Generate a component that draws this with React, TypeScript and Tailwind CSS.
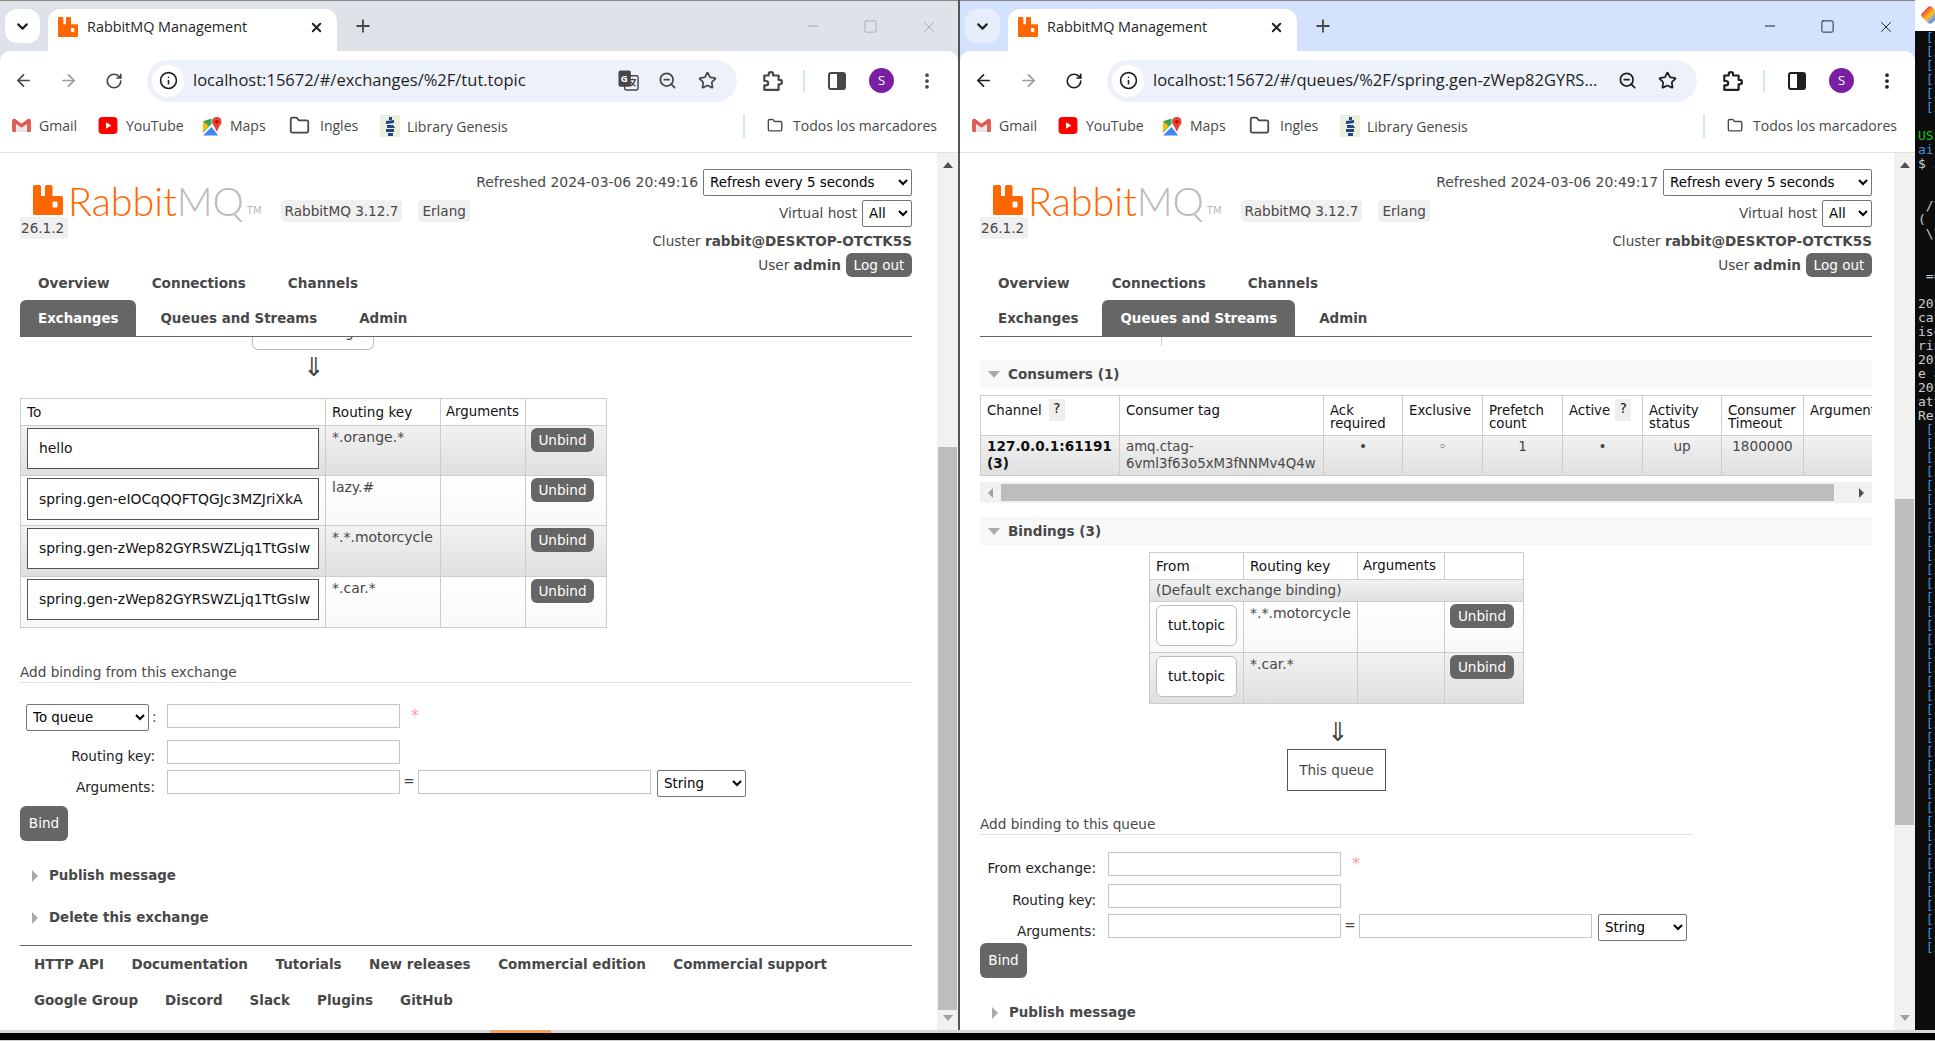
import type { ReactNode } from "react";
import {
  ArrowLeft,
  ArrowRight,
  ChevronDown,
  EllipsisVertical,
  Folder,
  Info,
  Minus,
  Plus,
  RotateCw,
  Square,
  Star,
  X,
  ZoomOut,
} from "lucide-react";

function RabbitIcon({ className }: { className: string }) {
  return (
    <svg viewBox="0 0 30 30" className={className}>
      <path
        fill="#ff6600"
        fillRule="evenodd"
        d="M1.5 0H6.5Q8 0 8 1.5V11H12V1.5Q12 0 13.5 0H18Q19.5 0 19.5 1.5V11H28.5Q30 11 30 12.5V28.5Q30 30 28.5 30H1.5Q0 30 0 28.5V1.5Q0 0 1.5 0ZM20.5 16.5Q19.5 16.5 19.5 17.5V21.5Q19.5 22.5 20.5 22.5H23.5Q24.5 22.5 24.5 21.5V17.5Q24.5 16.5 23.5 16.5Z"
      />
    </svg>
  );
}

function GmailIcon() {
  return (
    <svg viewBox="0 0 20 16" className="h-[15px] w-[19px]">
      <path fill="#e8e8e8" d="M3 15V4l7 5 7-5v11z" />
      <path fill="#e0594e" d="M0 3v10.5A1.5 1.5 0 0 0 1.5 15H4V6l6 4.5L16 6v9h2.5a1.5 1.5 0 0 0 1.500-1.500V3c0-2-2.200-3-3.700-1.800L10 6 3.700 1.200C2.200 0 0 1 0 3z" />
    </svg>
  );
}

function YoutubeIcon() {
  return (
    <svg viewBox="0 0 20 18" className="h-[17px] w-[20px]">
      <rect width="20" height="18" rx="4" fill="#ff0000" />
      <path d="M8 5.500l5.500 3.500L8 12.500z" fill="#fff" />
    </svg>
  );
}

function MapsIcon() {
  return (
    <svg viewBox="0 0 20 20" className="h-[20px] w-[19px]">
      <path fill="#34a853" d="M0 5l9-3v6L0 17z" />
      <path fill="#4285f4" d="M0 20l9-9 7 9z" />
      <path fill="#fbbc04" d="M0 5l6 5-6 6z" />
      <circle cx="14.500" cy="5.500" r="5" fill="#ea4335" />
      <path fill="#ea4335" d="M10.500 8h8l-4 8z" />
      <circle cx="14.500" cy="5.500" r="1.800" fill="#a50e0e" />
    </svg>
  );
}

function GenesisIcon() {
  return (
    <svg viewBox="0 0 20 22" className="h-[22px] w-[20px]">
      <rect width="20" height="22" fill="#eeeedd" />
      <path fill="#1d4788" d="M9 2h3v3H9zM6 6l8-1v3l-8 1zM7 10h6l2 3H7zM6 14h8v3H6zM8 18h5v3H8z" />
    </svg>
  );
}

function TranslateIcon() {
  return (
    <svg viewBox="0 0 22 22" className="ml-[19px] h-[21px] w-[21px]">
      <rect x="7" y="6" width="14" height="15" rx="1.500" fill="#edf2fa" stroke="#474747" strokeWidth="1.500" />
      <rect x="0.500" y="0.500" width="13" height="17" rx="2" fill="#474747" />
      <text x="3" y="12.500" fontSize="10" fontWeight="700" fontFamily="Open Sans, sans-serif" fill="#fff">G</text>
      <path d="M12 10h7M15.500 9v1.500M18 10.500q-2 5-5 6.500M13.500 12.500q2 3 5 4.500" stroke="#474747" strokeWidth="1.300" fill="none" />
    </svg>
  );
}

function PuzzleIcon({ className }: { className: string }) {
  return (
    <svg viewBox="0 0 20 20" fill="none" stroke="currentColor" strokeWidth="2" strokeLinejoin="round" className={`h-[22px] w-[22px] ${className}`}>
      <path d="M3 5h4V4a2 2 0 0 1 4 0v1h5v4h1a2 2 0 0 1 0 4h-1v5H3v-4h1.500a2 2 0 0 0 0-4H3z" />
    </svg>
  );
}

function SidePanelIcon({ className }: { className: string }) {
  return (
    <svg viewBox="0 0 18 18" className={`h-[18px] w-[18px] ${className}`}>
      <rect x="1" y="1" width="16" height="16" rx="2" fill="none" stroke="currentColor" strokeWidth="2" />
      <rect x="9" y="1" width="8" height="16" fill="currentColor" />
    </svg>
  );
}

function Bookmark({ icon, label, gap = "ml-[8px]", width }: { icon: ReactNode; label: string; gap?: string; width: string }) {
  return (
    <div className={`flex items-center ${width}`}>
      {icon}
      <span className={`${gap} whitespace-nowrap text-[14px] text-[#474747]`}>{label}</span>
    </div>
  );
}

function ChromeBar({ active, url, translate = false }: { active: boolean; url: string; translate?: boolean }) {
  const iconColor = active ? "text-[#1f1f1f]" : "text-[#474747]";
  const winColor = active ? "text-[#1f1f1f]" : "text-[#a7abb0]";
  return (
    <div className={`font-['Open_Sans',sans-serif] ${active ? "bg-[#d3e3fd]" : "bg-[#dee3ea]"}`}>
      <div className="flex h-[51px] border-t border-[#888]">
        <div className={`ml-[5px] mt-[8px] flex h-[34px] w-[35px] items-center justify-center rounded-[12px] ${active ? "bg-[#e6eefc]" : "bg-white"}`}>
          <ChevronDown size={17} strokeWidth={3} className="text-[#1f1f1f]" />
        </div>
        <div className="ml-[8px] mt-[8px] flex h-[42px] w-[289px] items-center rounded-t-[12px] bg-white pb-[6px] pl-[10px]">
          <RabbitIcon className="h-[20px] w-[20px]" />
          <span className="ml-[9px] w-[217px] whitespace-nowrap text-[14.400px] text-[#1f1f1f]">RabbitMQ Management</span>
          <X size={15} strokeWidth={3} className="ml-[5px] text-[#1f1f1f]" />
        </div>
        <Plus size={20} strokeWidth={2.2} className="ml-[16px] mt-[15px] text-[#474747]" />
        <div className="flex-1" />
        <div className={`mr-[20px] mt-[18px] flex items-start gap-[42px] ${winColor}`}>
          <Minus size={16} strokeWidth={1.5} className="mt-[-1px]" />
          <Square size={15} strokeWidth={1.5} />
          <X size={18} strokeWidth={1.3} className="mt-[-1px]" />
        </div>
      </div>
      <div className="rounded-t-[10px] bg-white">
        <div className="flex h-[59px] items-center pl-[1px]">
          <div className="flex h-[45px] w-[45px] items-center justify-center"><ArrowLeft size={19} strokeWidth={2.2} className={iconColor} /></div>
          <div className="flex h-[45px] w-[45px] items-center justify-center"><ArrowRight size={19} strokeWidth={2.2} className="text-[#9a9a9a]" /></div>
          <div className="flex h-[45px] w-[45px] items-center justify-center"><RotateCw size={18} strokeWidth={2.2} className={iconColor} /></div>
          <div className="ml-[11px] flex h-[42px] w-[590px] items-center rounded-full bg-[#edf2fa] pl-[5px]">
            <div className="flex h-[32px] w-[32px] items-center justify-center rounded-full bg-white">
              <Info size={19} strokeWidth={2} className="text-[#1f1f1f]" />
            </div>
            <span className="ml-[9px] w-[406px] whitespace-nowrap text-[16.500px] text-[#1f1f1f]">{url}</span>
            {translate ? <TranslateIcon /> : <span className="ml-[19px] w-[21px]" />}
            <ZoomOut size={19} strokeWidth={2.2} className={`ml-[19px] ${iconColor}`} />
            <Star size={19} strokeWidth={2.2} className={`ml-[21px] ${iconColor}`} />
          </div>
          <div className="ml-[12px] flex h-[45px] w-[45px] items-center justify-center"><PuzzleIcon className={iconColor} /></div>
          <div className="mx-[9px] h-[22px] w-[2px] bg-[#d3e3fd]" />
          <div className="flex h-[45px] w-[45px] items-center justify-center"><SidePanelIcon className={iconColor} /></div>
          <div className="flex h-[45px] w-[45px] items-center justify-center">
            <div className="flex h-[25px] w-[25px] items-center justify-center rounded-full bg-[#7b1fa2] text-[13px] text-white">S</div>
          </div>
          <div className="flex h-[45px] w-[45px] items-center justify-center"><EllipsisVertical size={20} strokeWidth={2.5} className={iconColor} /></div>
        </div>
        <div className="flex h-[42px] items-start pl-[12px] pt-[5px]">
          <Bookmark icon={<GmailIcon />} label="Gmail" width="w-[86px]" />
          <Bookmark icon={<YoutubeIcon />} label="YouTube" width="w-[105px]" />
          <Bookmark icon={<MapsIcon />} label="Maps" width="w-[86px]" />
          <Bookmark icon={<Folder size={21} strokeWidth={2} className="text-[#474747]" />} label="Ingles" gap="ml-[10px]" width="w-[91px]" />
          <Bookmark icon={<GenesisIcon />} label="Library Genesis" gap="ml-[7px]" width="w-[363px]" />
          <div className="mt-[-1px] h-[24px] w-[2px] bg-[#d3e3fd]" />
          <div className="ml-[22px]">
            <Bookmark icon={<Folder size={21} strokeWidth={2} className="text-[#474747]" />} label="Todos los marcadores" gap="ml-[10px]" width="w-[170px]" />
          </div>
        </div>
        <div className="h-px bg-[#e0e0e0]" />
      </div>
    </div>
  );
}

function Scrollbar({ top, thumb }: { top: string; thumb: string }) {
  return (
    <div className="flex h-full w-[21px] shrink-0 flex-col bg-[#f1f1f1]">
      <div className={`${top} flex justify-center pt-[9px]`}>
        <div className="h-0 w-0 border-x-[5px] border-b-[6px] border-x-transparent border-b-[#505050]" />
      </div>
      <div className={`${thumb} mx-[1px] bg-[#bdbdbd]`} />
      <div className="flex flex-1 items-end justify-center pb-[9px]">
        <div className="h-0 w-0 border-x-[5px] border-t-[6px] border-x-transparent border-t-[#a0a0a0]" />
      </div>
    </div>
  );
}

function Badge({ children, className = "" }: { children: ReactNode; className?: string }) {
  return <span className={`rounded-[4px] bg-[#f0f0f0] leading-[22px] ${className}`}>{children}</span>;
}

function Select({ value, className }: { value: string; className: string }) {
  return (
    <select defaultValue={value} className={`h-[27px] rounded-[2px] border border-[#767676] bg-white pl-[2px] text-[13.400px] text-black ${className}`}>
      <option>{value}</option>
    </select>
  );
}

function GrayButton({ children, className }: { children: ReactNode; className: string }) {
  return <div className={`flex items-center justify-center rounded-[6px] bg-[#666] text-white ${className}`}>{children}</div>;
}

function Header({ refreshed, tab }: { refreshed: string; tab: "exchanges" | "queues" }) {
  return (
    <div className="w-[892px]">
      <div className="flex h-[121px] justify-between pt-[16px]">
        <div className="pt-[13px]">
          <div className="flex h-[34px] items-start">
            <RabbitIcon className="ml-[13px] mt-[3px] h-[30px] w-[30px]" />
            <div className="ml-[5px] mt-[-6px] whitespace-nowrap font-['Lato',sans-serif] text-[39.500px] leading-[50px] font-light text-[#ff6600]">
              Rabbit<span className="text-[#bbbbbb]">MQ</span>
            </div>
            <span className="ml-[3px] mt-[23px] text-[10px] leading-[12px] text-[#bbb]">TM</span>
            <Badge className="ml-[19px] mt-[18px] px-[4px]">RabbitMQ 3.12.7</Badge>
            <Badge className="ml-[16px] mt-[18px] rounded-r-none px-[4px]">Erlang</Badge>
          </div>
          <Badge className="mt-[1px] inline-block rounded-l-none pl-[1px] pr-[4px]">26.1.2</Badge>
        </div>
        <div className="flex flex-col items-end">
          <div className="flex items-center gap-[5px]">
            <span className="text-[13.900px]">Refreshed {refreshed}</span>
            <Select value="Refresh every 5 seconds" className="w-[209px]" />
          </div>
          <div className="mt-[4px] flex items-center gap-[5px]">
            <span>Virtual host</span>
            <Select value="All" className="w-[50px]" />
          </div>
          <div className="mt-[4px] leading-[20px]">
            Cluster <b>rabbit@DESKTOP-OTCTK5S</b>
          </div>
          <div className="mt-[2px] flex items-center gap-[5px]">
            <span>User <b>admin</b></span>
            <GrayButton className="h-[24px] w-[66px]">Log out</GrayButton>
          </div>
        </div>
      </div>
      <div className="flex h-[19px] items-center pl-[18px] font-bold">
        <span className="mr-[42px]">Overview</span>
        <span className="mr-[42px]">Connections</span>
        <span>Channels</span>
      </div>
      <div className="flex h-[44px] items-end border-b border-[#666] text-[13.400px] font-bold">
        <div className={`flex h-[36px] items-center rounded-t-[6px] px-[18px] pt-[2px] ${tab === "exchanges" ? "bg-[#666] text-white" : ""}`}>Exchanges</div>
        <div className={`ml-[6px] flex h-[36px] items-center rounded-t-[6px] px-[18px] pt-[2px] ${tab === "queues" ? "bg-[#666] text-white" : ""}`}>Queues and Streams</div>
        <div className="ml-[6px] flex h-[36px] items-center px-[18px] pt-[2px]">Admin</div>
      </div>
    </div>
  );
}

function Input({ className = "w-[233px]" }: { className?: string }) {
  return <input className={`h-[24px] border border-[#c4c4c4] bg-white ${className}`} />;
}

function BindingForm({ label, labelWidth, firstRow }: { label: ReactNode; labelWidth: string; firstRow: string }) {
  return (
    <div>
      <div className={`flex ${firstRow}`}>
        <div className={`${labelWidth} shrink-0`}>{label}</div>
        <Input />
        <span className="ml-[11px] mt-[4px] text-[16px] leading-[16px] text-[#f99]">*</span>
      </div>
      <div className="mt-[6px] flex h-[24px]">
        <div className={`${labelWidth} shrink-0 pr-[12px] pt-[6px] text-right text-[#222]`}>Routing key:</div>
        <Input />
      </div>
      <div className="mt-[6px] flex h-[26px]">
        <div className={`${labelWidth} shrink-0 pr-[12px] pt-[7px] text-right text-[#222]`}>Arguments:</div>
        <Input />
        <span className="w-[18px] pt-[1px] text-center">=</span>
        <Input />
        <Select value="String" className="ml-[6px] h-[26px] w-[89px]" />
      </div>
    </div>
  );
}

function Collapsed({ title, className }: { title: string; className: string }) {
  return (
    <div className={`flex items-center font-bold ${className}`}>
      <div className="h-0 w-0 border-y-[6px] border-l-[6px] border-y-transparent border-l-[#aaa]" />
      <span className="ml-[11px] text-[13.400px]">{title}</span>
    </div>
  );
}

function SectionBand({ title, className }: { title: string; className: string }) {
  return (
    <div className={`flex h-[28px] w-[892px] items-center bg-[#f8f8f8] pl-[8px] ${className}`}>
      <div className="h-0 w-0 border-x-[6px] border-t-[7px] border-x-transparent border-t-[#aaa]" />
      <b className="ml-[8px]">{title}</b>
    </div>
  );
}

const rowOdd = "bg-linear-to-b from-[#f2f2f2] to-[#dfdfdf]";
const rowEven = "bg-linear-to-b from-white to-[#f8f8f8]";
const cell = "border border-[#ccc] px-[6px] align-top";
const buttonCell = "border border-[#ccc] pl-[5px] pt-[2px] align-top";

function ExchangesPage() {
  const bindings = [
    { to: "hello", key: "*.orange.*", row: rowOdd, rowH: "h-[50px]", box: "h-[41px]" },
    { to: "spring.gen-eIOCqQQFTQGJc3MZJriXkA", key: "lazy.#", row: rowEven, rowH: "h-[50px]", box: "h-[42px]" },
    { to: "spring.gen-zWep82GYRSWZLjq1TtGsIw", key: "*.*.motorcycle", row: rowOdd, rowH: "h-[51px]", box: "h-[41px]" },
    { to: "spring.gen-zWep82GYRSWZLjq1TtGsIw", key: "*.car.*", row: rowEven, rowH: "h-[51px]", box: "h-[41px]" },
  ];
  return (
    <div className="pl-[20px]">
      <Header refreshed="2024-03-06 20:49:16" tab="exchanges" />
      <div className="ml-[232px] h-[13px] w-[122px] overflow-hidden rounded-b-[6px] border border-t-0 border-[#bbb] text-center">
        <div className="mt-[-15px] leading-[20px]">This exchange</div>
      </div>
      <div className="ml-[283px] mt-[5px] h-[23px] text-[26px] leading-[24px]">⇓</div>
      <table className="mt-[20px] w-[586px] table-fixed border-collapse">
        <colgroup>
          <col className="w-[305px]" />
          <col className="w-[115px]" />
          <col className="w-[85px]" />
          <col className="w-[81px]" />
        </colgroup>
        <thead>
          <tr className="h-[27px] text-left text-[#111]">
            <th className="border border-[#ccc] px-[6px] font-normal">To</th>
            <th className="border border-[#ccc] px-[6px] font-normal">Routing key</th>
            <th className="border border-[#ccc] pl-[5px] text-[13.300px] font-normal">Arguments</th>
            <th className="border border-[#ccc]" />
          </tr>
        </thead>
        <tbody>
          {bindings.map((b, i) => (
            <tr key={i} className={`${b.rowH} ${b.row}`}>
              <td className={`${cell} pt-[2px]`}>
                <div className={`${b.box} flex items-center border border-[#555] bg-white pl-[11px] text-[13.900px] whitespace-nowrap text-[#111]`}>{b.to}</div>
              </td>
              <td className={`${cell} pt-[1px] text-[14px] leading-[20px] whitespace-nowrap`}>{b.key}</td>
              <td className={cell} />
              <td className={buttonCell}>
                <GrayButton className="h-[24px] w-[63px]">Unbind</GrayButton>
              </td>
            </tr>
          ))}
        </tbody>
      </table>
      <div className="mt-[34px] h-[20px] w-[892px] box-content border-b border-[#e2e2e2] leading-[20px]">Add binding from this exchange</div>
      <div className="mt-[21px]">
        <BindingForm
          firstRow="h-[30px]"
          labelWidth="w-[147px]"
          label={
            <div className="flex items-center pl-[6px]">
              <Select value="To queue" className="w-[123px]" />
              <span className="ml-[3px]">:</span>
            </div>
          }
        />
      </div>
      <GrayButton className="mt-[10px] h-[35px] w-[48px]">Bind</GrayButton>
      <Collapsed title="Publish message" className="ml-[12px] mt-[25px] h-[20px]" />
      <Collapsed title="Delete this exchange" className="ml-[12px] mt-[22px] h-[20px]" />
      <div className="mt-[17px] w-[892px] border-t border-[#666] pl-[14px] text-[13.500px] font-bold">
        <div className="flex h-[36px] items-center gap-[27.500px]">
          <span>HTTP API</span>
          <span>Documentation</span>
          <span>Tutorials</span>
          <span>New releases</span>
          <span>Commercial edition</span>
          <span>Commercial support</span>
        </div>
        <div className="flex h-[36px] items-center gap-[27px]">
          <span>Google Group</span>
          <span>Discord</span>
          <span>Slack</span>
          <span>Plugins</span>
          <span>GitHub</span>
        </div>
      </div>
    </div>
  );
}

function HelpMark({ className }: { className: string }) {
  return <span className={`mt-[-5px] inline-block h-[22px] w-[16px] bg-[#eee] text-center align-top leading-[20px] ${className}`}>?</span>;
}

function QueuesPage() {
  const headers = [
    { w: "w-[139px]", label: <>Channel <HelpMark className="ml-[3px]" /></> },
    { w: "w-[204px]", label: "Consumer tag" },
    { w: "w-[79px]", label: <>Ack<br />required</> },
    { w: "w-[80px]", label: "Exclusive" },
    { w: "w-[80px]", label: <>Prefetch<br />count</> },
    { w: "w-[80px]", label: <>Active <HelpMark className="ml-[1px]" /></> },
    { w: "w-[79px]", label: <>Activity<br />status</> },
    { w: "w-[82px]", label: <>Consumer<br />Timeout</> },
    { w: "w-[69px]", label: "Arguments" },
  ];
  return (
    <div className="pl-[20px]">
      <Header refreshed="2024-03-06 20:49:17" tab="queues" />
      <div className="ml-[181px] h-[9px] w-px bg-[#ccc]" />
      <SectionBand title="Consumers (1)" className="mt-[14px]" />
      <div className="mt-[7px] w-[892px] overflow-hidden">
        <table className="w-[892px] table-fixed border-collapse">
          <colgroup>
            {headers.map((h, i) => (
              <col key={i} className={h.w} />
            ))}
          </colgroup>
          <thead>
            <tr className="h-[40px] text-left text-[#111]">
              {headers.map((h, i) => (
                <th key={i} className="overflow-hidden border border-[#ccc] px-[6px] pt-[8px] align-top text-[13.300px] leading-[13px] font-normal whitespace-nowrap">{h.label}</th>
              ))}
            </tr>
          </thead>
          <tbody>
            <tr className={`h-[40px] ${rowOdd}`}>
              <td className={`${cell} pt-[2px] leading-[17px] font-bold text-[#111]`}>127.0.0.1:61191 (3)</td>
              <td className={`${cell} pt-[2px] text-[13.300px] leading-[17px] whitespace-nowrap`}>amq.ctag-<br />6vml3f63o5xM3fNNMv4Q4w</td>
              <td className={`${cell} pt-[2px] text-center leading-[17px]`}>•</td>
              <td className={`${cell} pt-[2px] text-center leading-[17px]`}>◦</td>
              <td className={`${cell} pt-[2px] text-center leading-[17px]`}>1</td>
              <td className={`${cell} pt-[2px] text-center leading-[17px]`}>•</td>
              <td className={`${cell} pt-[2px] text-center leading-[17px]`}>up</td>
              <td className={`${cell} pt-[2px] text-center leading-[17px]`}>1800000</td>
              <td className={cell} />
            </tr>
          </tbody>
        </table>
      </div>
      <div className="mt-[6px] flex h-[21px] w-[892px] items-center bg-[#f1f1f1]">
        <div className="ml-[8px] h-0 w-0 border-y-[5px] border-r-[5px] border-y-transparent border-r-[#a0a0a0]" />
        <div className="ml-[8px] h-[17px] w-[833px] bg-[#bdbdbd]" />
        <div className="ml-[25px] h-0 w-0 border-y-[5px] border-l-[5px] border-y-transparent border-l-[#505050]" />
      </div>
      <SectionBand title="Bindings (3)" className="mt-[14px]" />
      <table className="ml-[169px] mt-[7px] w-[374px] table-fixed border-collapse">
        <colgroup>
          <col className="w-[94px]" />
          <col className="w-[114px]" />
          <col className="w-[87px]" />
          <col className="w-[79px]" />
        </colgroup>
        <thead>
          <tr className="h-[27px] text-left text-[#111]">
            <th className="border border-[#ccc] px-[6px] font-normal">From</th>
            <th className="border border-[#ccc] px-[6px] font-normal">Routing key</th>
            <th className="border border-[#ccc] pl-[5px] text-[13.300px] font-normal">Arguments</th>
            <th className="border border-[#ccc]" />
          </tr>
        </thead>
        <tbody>
          <tr className={`h-[22px] ${rowOdd}`}>
            <td colSpan={4} className="border border-[#ccc] px-[6px] whitespace-nowrap">(Default exchange binding)</td>
          </tr>
          {[
            { key: "*.*.motorcycle", row: rowEven },
            { key: "*.car.*", row: rowOdd },
          ].map((b) => (
            <tr key={b.key} className={`h-[51px] ${b.row}`}>
              <td className={`${cell} pt-[3px]`}>
                <div className="flex h-[41px] items-center justify-center rounded-[6px] border border-[#bbb] bg-white text-[#111]">tut.topic</div>
              </td>
              <td className={`${cell} pt-[1px] text-[14px] leading-[20px] whitespace-nowrap`}>{b.key}</td>
              <td className={cell} />
              <td className={buttonCell}>
                <GrayButton className="h-[24px] w-[64px]">Unbind</GrayButton>
              </td>
            </tr>
          ))}
        </tbody>
      </table>
      <div className="ml-[347px] mt-[16px] h-[24px] text-[26px] leading-[24px]">⇓</div>
      <div className="ml-[307px] mt-[5px] flex h-[42px] w-[99px] items-center justify-center border border-[#555]">This queue</div>
      <div className="mt-[23px] h-[20px] w-[713px] box-content border-b border-[#e2e2e2] leading-[20px]">Add binding to this queue</div>
      <div className="mt-[17px]">
        <BindingForm
          firstRow="h-[26px]"
          labelWidth="w-[128px]"
          label={<div className="pr-[12px] pt-[6px] text-right text-[#222]">From exchange:</div>}
        />
      </div>
      <GrayButton className="mt-[3px] h-[35px] w-[47px]">Bind</GrayButton>
      <Collapsed title="Publish message" className="ml-[12px] mt-[25px] h-[20px]" />
    </div>
  );
}

function BrowserWindow({ active, url, translate, width, scrollTop, scrollThumb, children }: {
  active: boolean;
  url: string;
  translate?: boolean;
  width: string;
  scrollTop: string;
  scrollThumb: string;
  children: ReactNode;
}) {
  return (
    <div className={`flex h-full ${width} shrink-0 flex-col bg-white`}>
      <ChromeBar active={active} url={url} translate={translate} />
      <div className="flex min-h-0 flex-1">
        <div className="min-w-0 flex-1 overflow-hidden font-['DejaVu_Sans',sans-serif] text-[13.600px] text-[#484848]">{children}</div>
        <Scrollbar top={scrollTop} thumb={scrollThumb} />
      </div>
    </div>
  );
}

const bracket = (
  <>
    {" "}
    <span className="text-[#3a96dd]">[</span>
    <span className="text-[#c19c00]">x</span>
  </>
);

const terminalLines: { text: ReactNode; color?: string }[] = [
  ...Array.from({ length: 6 }, () => ({ text: bracket })),
  { text: " " },
  { text: "USE", color: "text-[#16c60c]" },
  { text: "air", color: "text-[#3a96dd]" },
  { text: "$ i" },
  { text: " " },
  { text: "  ." },
  { text: " /\\" },
  { text: "( (" },
  { text: " \\\\" },
  { text: "  '" },
  { text: " " },
  { text: " ==" },
  { text: "  :" },
  { text: "202" },
  { text: "cat" },
  { text: "ise" },
  { text: "rin" },
  { text: "202" },
  { text: "e a" },
  { text: "202" },
  { text: "att" },
  { text: "Rea" },
  ...Array.from({ length: 38 }, () => ({ text: bracket })),
];

function Terminal() {
  return (
    <div className="flex h-full min-w-0 flex-1 flex-col overflow-hidden bg-[#0c0c0c]">
      <div className="h-[31px] shrink-0 bg-white pl-[8px] pt-[8px]">
        <div className="h-[14px] w-[14px] rotate-45 rounded-[3px] bg-linear-to-r from-[#ea4335] via-[#fbbc04] to-[#4285f4]" />
      </div>
      <div className="pl-[3px] font-['DejaVu_Sans_Mono',monospace] text-[13px] leading-[14px] whitespace-pre text-[#cccccc]">
        {terminalLines.map((l, i) => (
          <div key={i} className={`h-[14px] ${l.color ?? ""}`}>{l.text}</div>
        ))}
      </div>
    </div>
  );
}

export default function App() {
  return (
    <div className="flex h-[1041px] w-[1935px] flex-col overflow-hidden bg-black">
      <div className="flex h-[1030px] shrink-0">
        <BrowserWindow
          active={false}
          translate
          url="localhost:15672/#/exchanges/%2F/tut.topic"
          width="w-[958px]"
          scrollTop="h-[294px]"
          scrollThumb="h-[563px]"
        >
          <ExchangesPage />
        </BrowserWindow>
        <div className="w-[2px] shrink-0 bg-[#555]" />
        <BrowserWindow
          active
          url="localhost:15672/#/queues/%2F/spring.gen-zWep82GYRS..."
          width="w-[955px]"
          scrollTop="h-[346px]"
          scrollThumb="h-[326px]"
        >
          <QueuesPage />
        </BrowserWindow>
        <Terminal />
      </div>
      <div className="flex h-[3px] shrink-0 bg-[#d8d8d8]">
        <div className="ml-[490px] h-full w-[61px] bg-[#f4a261]" />
      </div>
      <div className="h-[7px] shrink-0 bg-black" />
      <div className="h-px shrink-0 bg-[#d0d0d0]" />
    </div>
  );
}
